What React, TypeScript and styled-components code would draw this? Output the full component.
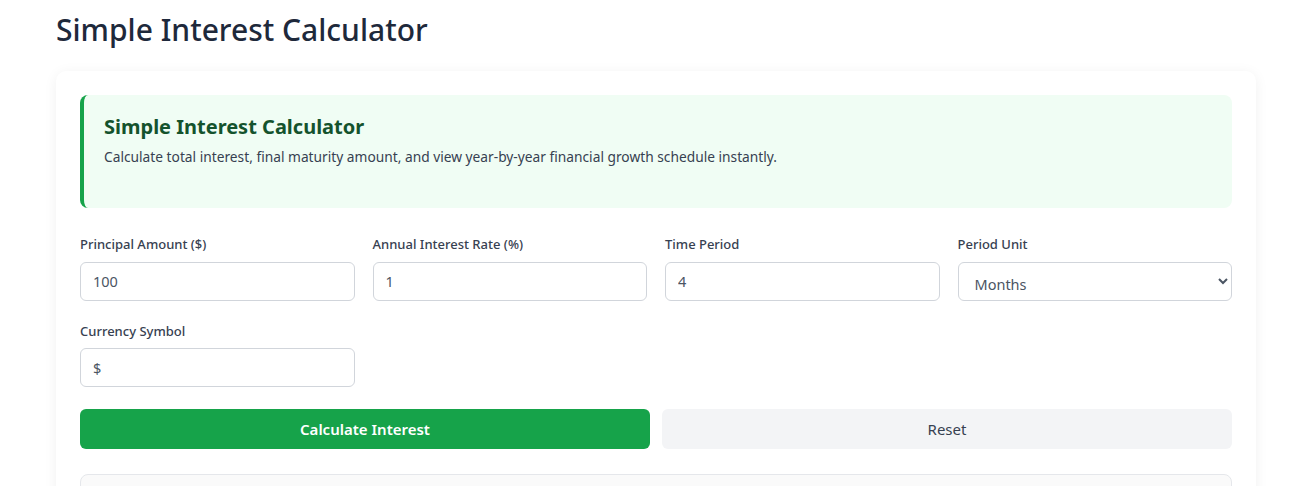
import styled, { createGlobalStyle } from "styled-components";

const GlobalStyle = createGlobalStyle`
  * { box-sizing: border-box; }
  body {
    margin: 0;
    background: #ffffff;
    font-family: "Noto Sans", "Open Sans", sans-serif;
    color: #1f2937;
  }
`;

const fields = [
  { label: "Principal Amount ($)", value: "100" },
  { label: "Annual Interest Rate (%)", value: "1" },
  { label: "Time Period", value: "4" },
];

const App = () => {
  return (
    <Page>
      <GlobalStyle />
      <PageTitle>Simple Interest Calculator</PageTitle>
      <Card>
        <IntroBox>
          <IntroTitle>Simple Interest Calculator</IntroTitle>
          <IntroText>
            Calculate total interest, final maturity amount, and view year-by-year financial growth schedule instantly.
          </IntroText>
        </IntroBox>

        <FieldGrid>
          {fields.map((f) => (
            <Field key={f.label}>
              <Label>{f.label}</Label>
              <Input defaultValue={f.value} />
            </Field>
          ))}
          <Field>
            <Label>Period Unit</Label>
            <Select defaultValue="months">
              <option value="years">Years</option>
              <option value="months">Months</option>
              <option value="days">Days</option>
            </Select>
          </Field>
          <Field>
            <Label>Currency Symbol</Label>
            <Input defaultValue="$" />
          </Field>
        </FieldGrid>

        <ButtonRow>
          <Button $primary>Calculate Interest</Button>
          <Button>Reset</Button>
        </ButtonRow>

        <ResultBox />
      </Card>
    </Page>
  );
};

export default App;

const Page = styled.div`
  padding: 0 49px 0 56px;
`;

const PageTitle = styled.h1`
  margin: 0;
  padding: 10px 0 22px;
  font-size: 30px;
  font-weight: 500;
  color: #1e293b;
  line-height: 1.3;
`;

const Card = styled.div`
  width: 1200px;
  background: #fff;
  border-radius: 10px;
  box-shadow: 0 2px 14px rgba(0, 0, 0, 0.06);
  padding: 24px;
`;

const IntroBox = styled.div`
  background: #f0fdf4;
  border-left: 4px solid #16a34a;
  border-radius: 8px;
  padding: 19px 20px 40px;
  margin-bottom: 28px;
`;

const IntroTitle = styled.h2`
  margin: 0 0 7px;
  font-size: 20px;
  font-weight: 700;
  color: #14532d;
  line-height: 1.3;
`;

const IntroText = styled.p`
  margin: 0;
  font-size: 13.75px;
  color: #374151;
  line-height: 1.5;
`;

const FieldGrid = styled.div`
  display: grid;
  grid-template-columns: repeat(4, 1fr);
  column-gap: 18px;
  row-gap: 22px;
`;

const Field = styled.div`
  display: flex;
  flex-direction: column;
  gap: 9px;
`;

const Label = styled.label`
  font-size: 13px;
  font-weight: 500;
  color: #374151;
  line-height: 1.3;
`;

const Input = styled.input`
  height: 39px;
  padding: 0 12px;
  border: 1px solid #d1d5db;
  border-radius: 6px;
  font-family: inherit;
  font-size: 14.5px;
  color: #4b5563;
  background: #fff;
  outline: none;
`;

const Select = styled.select`
  height: 39px;
  padding: 6px 12px 0;
  border: 1px solid #d1d5db;
  border-radius: 6px;
  font-family: inherit;
  font-size: 14.5px;
  color: #4b5563;
  background: #fff;
  outline: none;
`;

const ButtonRow = styled.div`
  display: grid;
  grid-template-columns: 1fr 1fr;
  gap: 12px;
  margin-top: 22px;
`;

const Button = styled.button<{ $primary?: boolean }>`
  height: 40px;
  border: none;
  border-radius: 6px;
  font-family: inherit;
  font-size: 15px;
  font-weight: ${(p) => (p.$primary ? 600 : 400)};
  color: ${(p) => (p.$primary ? "#ffffff" : "#374151")};
  background: ${(p) => (p.$primary ? "#16a34a" : "#f3f4f6")};
  cursor: pointer;
`;

const ResultBox = styled.div`
  margin-top: 25px;
  height: 80px;
  border: 1px solid #e5e7eb;
  border-radius: 8px;
  background: #fafafa;
`;
